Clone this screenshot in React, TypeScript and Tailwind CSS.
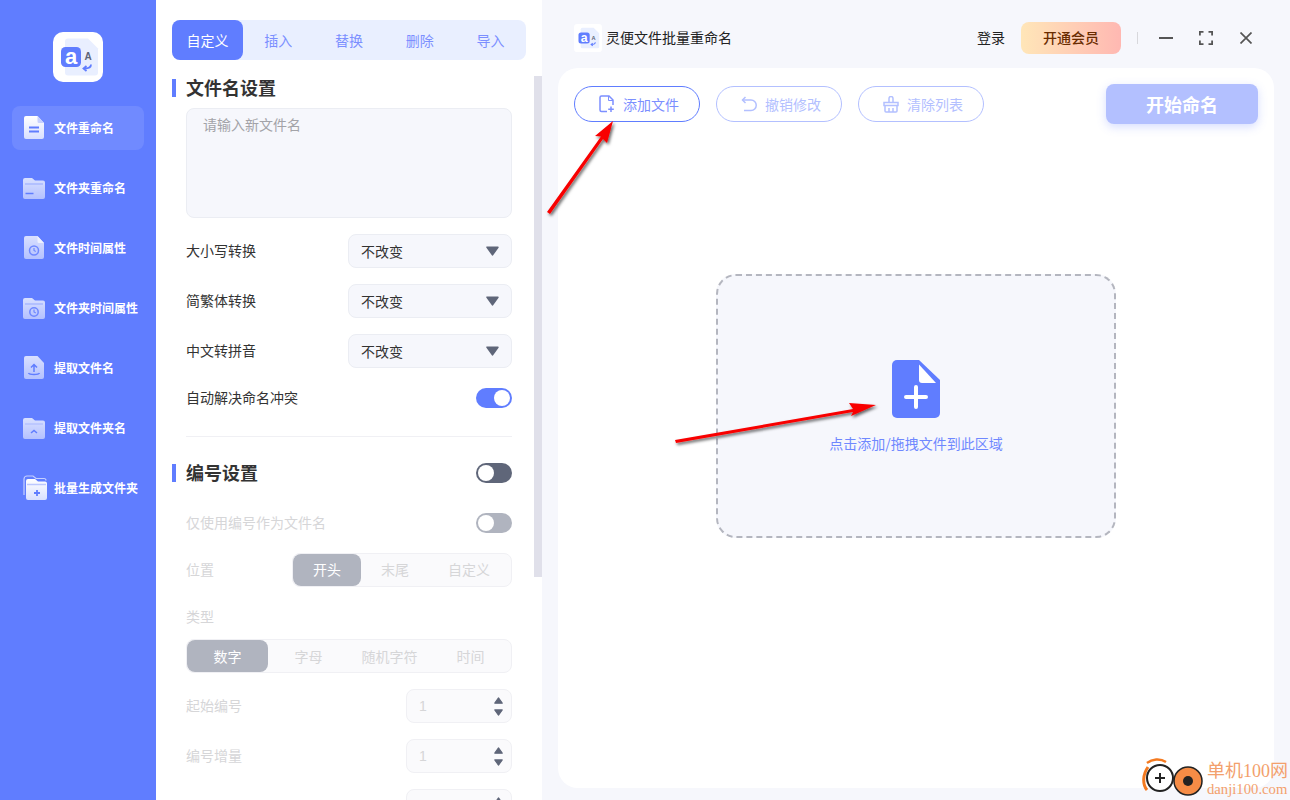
import React from "react";

function Logo({ size, dark = false }: { size: number; dark?: boolean }) {
  return (
    <svg width={size} height={size} viewBox="0 0 50 50" className="shrink-0">
      <rect width="50" height="50" rx={dark ? 6 : 10} fill="#fff" />
      <path d="M15 6.500h20l10 10v24a3 3 0 0 1-3 3H15a3 3 0 0 1-3-3v-31a3 3 0 0 1 3-3z" fill="#e9efff" />
      <rect x="8" y="15" width="20" height="20" rx="4.500" fill="#607dff" />
      <text x="18" y="32" textAnchor="middle" fontFamily="Liberation Sans" fontWeight="700" fontSize="22" fill="#fff">a</text>
      <text x="35" y="28" textAnchor="middle" fontFamily="Liberation Sans" fontWeight="700" fontSize="10" fill="#5d6478">A</text>
      <path d="M38 32.500c0 3-2.500 4-6.500 4M33.500 34l-3 2.500 3 2.500" stroke="#607dff" strokeWidth="1.800" fill="none" />
    </svg>
  );
}

function NavGrad() {
  return (
    <svg width="0" height="0" className="absolute">
      <defs>
        <linearGradient id="navA" x1="0" y1="0" x2="0" y2="1">
          <stop offset="0" stopColor="#ffffff" />
          <stop offset="1" stopColor="#d8dfff" />
        </linearGradient>
        <linearGradient id="navB" x1="0" y1="0" x2="0" y2="1">
          <stop offset="0" stopColor="#d9e0ff" />
          <stop offset="1" stopColor="#b4c1ff" />
        </linearGradient>
      </defs>
    </svg>
  );
}

const filePath = "M2 0h11.500L20 7v14a2 2 0 0 1-2 2H2a2 2 0 0 1-2-2V2a2 2 0 0 1 2-2z";
const folderPath = "M2 0h7l3 2.500h8a2 2 0 0 1 2 2V19a2 2 0 0 1-2 2H2a2 2 0 0 1-2-2V2a2 2 0 0 1 2-2z";

function Clock({ cx, cy, r }: { cx: number; cy: number; r: number }) {
  return (
    <g fill="none" stroke="#6f88ff" strokeWidth="1.500">
      <circle cx={cx} cy={cy} r={r} />
      <path d={`M${cx} ${cy - 2.500}V${cy}l1.800 1`} strokeWidth="1.200" />
    </g>
  );
}

function NavIcon({ kind }: { kind: number }) {
  if (kind === 0)
    return (
      <svg width="22" height="24" viewBox="-1 0 22 24">
        <path d={filePath} fill="url(#navA)" />
        <path d="M13.500 0L20 7h-5a1.500 1.500 0 0 1-1.500-1.500z" fill="#c6d0ff" />
        <path d="M5 11.500h10M5 15.500h10" stroke="#607dff" strokeWidth="2" />
      </svg>
    );
  if (kind === 1)
    return (
      <svg width="22" height="21" viewBox="0 0 22 21">
        <path d={folderPath} fill="url(#navB)" />
        <path d="M2 6h18" stroke="#a9b8ff" strokeWidth="1.500" />
        <path d="M2.500 15.500h8" stroke="#607dff" strokeWidth="1.500" />
      </svg>
    );
  if (kind === 2)
    return (
      <svg width="22" height="24" viewBox="-1 0 22 24">
        <path d={filePath} fill="url(#navB)" />
        <path d="M13.500 0L20 7h-5a1.500 1.500 0 0 1-1.500-1.500z" fill="#eef1ff" />
        <Clock cx={10} cy={14.500} r={4.500} />
      </svg>
    );
  if (kind === 3)
    return (
      <svg width="22" height="21" viewBox="0 0 22 21">
        <path d={folderPath} fill="url(#navB)" />
        <path d="M2 6h18" stroke="#a9b8ff" strokeWidth="1.500" />
        <Clock cx={11} cy={14} r={4.200} />
      </svg>
    );
  if (kind === 4)
    return (
      <svg width="22" height="24" viewBox="-1 0 22 24">
        <path d={filePath} fill="url(#navB)" />
        <path d="M10 16V8.500M7 11.500l3-3 3 3" stroke="#607dff" strokeWidth="1.500" fill="none" />
        <path d="M4.500 17c1 2 10 2 11 0" stroke="#607dff" strokeWidth="1.500" fill="none" />
      </svg>
    );
  if (kind === 5)
    return (
      <svg width="22" height="21" viewBox="0 0 22 21">
        <path d={folderPath} fill="url(#navB)" />
        <path d="M2 6h18" stroke="#a9b8ff" strokeWidth="1" />
        <path d="M8 15l3-2.500 3 2.500" stroke="#607dff" strokeWidth="1.500" fill="none" />
      </svg>
    );
  return (
    <svg width="26" height="26" viewBox="0 0 26 26">
      <path d="M1 20V4a3 3 0 0 1 3-3h6l3 2.500h8a2 2 0 0 1 2 2" stroke="#c6d0ff" strokeWidth="1.200" fill="none" />
      <path d="M5 4h7l3 2.500h7a2 2 0 0 1 2 2V23a2 2 0 0 1-2 2H5a2 2 0 0 1-2-2V6a2 2 0 0 1 2-2z" fill="url(#navA)" />
      <path d="M4 9.500h19" stroke="#bcc8ff" strokeWidth="1.500" />
      <path d="M14 15v6M11 18h6" stroke="#607dff" strokeWidth="1.800" />
    </svg>
  );
}

const navItems = ["文件重命名", "文件夹重命名", "文件时间属性", "文件夹时间属性", "提取文件名", "提取文件夹名", "批量生成文件夹"];

function Sidebar() {
  return (
    <aside className="w-[156px] shrink-0 bg-[#607dff] flex flex-col items-center pt-8">
      <NavGrad />
      <Logo size={50} />
      <nav className="mt-6 w-[132px] flex flex-col gap-4">
        {navItems.map((t, i) => (
          <div key={t} className={`h-11 rounded-lg flex items-center pl-[11px] ${i === 0 ? "bg-[#708aff]" : ""}`}>
            <span className="w-[31px] flex justify-start shrink-0">
              <NavIcon kind={i} />
            </span>
            <span className="text-xs font-bold text-white whitespace-nowrap">{t}</span>
          </div>
        ))}
      </nav>
    </aside>
  );
}

function Heading({ children }: { children: React.ReactNode }) {
  return (
    <div className="flex items-center gap-[10px]">
      <span className="w-1 h-[18px] bg-[#607dff]" />
      <span className="text-lg leading-[18px] font-bold text-[#333] -mt-0.5">{children}</span>
    </div>
  );
}

function Toggle({ on, bg }: { on: boolean; bg: string }) {
  return (
    <span className={`w-9 h-5 rounded-full flex items-center px-0.5 ${on ? "justify-end" : "justify-start"} ${bg}`}>
      <span className="w-4 h-4 rounded-full bg-white" />
    </span>
  );
}

function Tri({ w, h, down, fill = "#5f6679" }: { w: number; h: number; down: boolean; fill?: string }) {
  return (
    <svg width={w} height={h} viewBox="0 0 12 9">
      <path d={down ? "M1 1h10L6 8z" : "M1 8h10L6 1z"} fill={fill} stroke={fill} strokeWidth="1.500" strokeLinejoin="round" />
    </svg>
  );
}

function SelectRow({ label }: { label: string }) {
  return (
    <div className="flex items-center justify-between h-[34px]">
      <span className="text-sm text-[#333] -mt-0.5">{label}</span>
      <div className="w-[164px] h-[34px] rounded-lg border border-[#ebedf3] bg-[#f6f7fc] flex items-center justify-between pl-3 pr-3">
        <span className="text-sm text-[#333]">不改变</span>
        <Tri w={13} h={10} down />
      </div>
    </div>
  );
}

function Segmented({ items, widths, w, lift }: { items: string[]; widths: string[]; w: string; lift?: boolean }) {
  return (
    <div className={`h-[34px] rounded-lg border border-[#f0f0f4] bg-[#fafafc] flex ${w}`}>
      {items.map((t, i) => (
        <div
          key={t}
          className={`${widths[i]} h-full flex items-center justify-center text-sm rounded-lg ${lift ? "pb-0.5" : ""} ${i === 0 ? "bg-[#b0b4bf] text-white" : "text-[#d6d6d8]"}`}
        >
          {t}
        </div>
      ))}
    </div>
  );
}

function NumberRow({ label, value }: { label?: string; value?: string }) {
  return (
    <div className="flex items-center justify-between h-[34px]">
      <span className="text-sm text-[#d6d6d8] -mt-0.5">{label}</span>
      <div className="w-[106px] h-[34px] rounded-lg border border-[#f0f0f4] bg-[#fafafc] flex items-center justify-between pl-3 pr-2">
        <span className="text-sm text-[#d6d6d8] font-['Liberation_Sans']">{value}</span>
        <span className="flex flex-col gap-[5px]">
          <Tri w={9} h={7} down={false} />
          <Tri w={9} h={7} down />
        </span>
      </div>
    </div>
  );
}

function Settings() {
  const tabs = ["自定义", "插入", "替换", "删除", "导入"];
  return (
    <section className="w-[386px] shrink-0 bg-white pl-4 pt-5 overflow-hidden relative h-[800px]">
      <div className="w-[354px] h-10 rounded-lg bg-[#e9efff] flex">
        {tabs.map((t, i) => (
          <div
            key={t}
            className={`flex-1 flex items-center justify-center text-sm rounded-lg ${i === 0 ? "bg-[#607dff] text-white" : "text-[#7c8fff]"}`}
          >
            {t}
          </div>
        ))}
      </div>
      <div className="absolute right-0 top-[76px] w-2 h-[501px] bg-[#e0e0ea]" />
      <div className="mt-[19px]">
        <Heading>文件名设置</Heading>
      </div>
      <div className="ml-[14px] w-[326px]">
        <div className="mt-[11px] h-[110px] rounded-lg border border-[#ebedf3] bg-[#f6f7fc] px-4 py-[5px] text-sm text-[#a3a3a8]">请输入新文件名</div>
        <div className="mt-4 flex flex-col gap-4">
          <SelectRow label="大小写转换" />
          <SelectRow label="简繁体转换" />
          <SelectRow label="中文转拼音" />
        </div>
        <div className="mt-5 flex items-center justify-between h-5">
          <span className="text-sm text-[#333] -mt-0.5">自动解决命名冲突</span>
          <Toggle on bg="bg-[#607dff]" />
        </div>
        <div className="mt-7 h-px bg-[#f0f0f4]" />
      </div>
      <div className="mt-[26px] flex items-center justify-between w-[340px]">
        <Heading>编号设置</Heading>
        <Toggle on={false} bg="bg-[#5f6679]" />
      </div>
      <div className="ml-[14px] w-[326px]">
        <div className="mt-[30px] flex items-center justify-between h-5">
          <span className="text-sm text-[#d6d6d8] -mt-0.5">仅使用编号作为文件名</span>
          <Toggle on={false} bg="bg-[#b0b4bf]" />
        </div>
        <div className="mt-5 flex items-center justify-between">
          <span className="text-sm text-[#d6d6d8] -mt-0.5">位置</span>
          <Segmented lift items={["开头", "末尾", "自定义"]} widths={["w-[68px]", "w-[68px]", "w-[80px]"]} w="w-[220px]" />
        </div>
        <div className="mt-[20px] h-5 flex items-center text-sm text-[#d6d6d8] pb-0.5">类型</div>
        <div className="mt-3">
          <Segmented items={["数字", "字母", "随机字符", "时间"]} widths={["w-[81px]", "w-[81px]", "w-[81px]", "w-[81px]"]} w="w-[326px]" />
        </div>
        <div className="mt-4 flex flex-col gap-4">
          <NumberRow label="起始编号" value="1" />
          <NumberRow label="编号增量" value="1" />
          <NumberRow />
        </div>
      </div>
    </section>
  );
}

function ToolButton({ icon, label, active }: { icon: React.ReactNode; label: string; active?: boolean }) {
  return (
    <div
      className={`w-[126px] h-9 rounded-full border flex items-center pl-6 gap-2 text-sm bg-white ${
        active ? "border-[#607dff] text-[#7c8fff]" : "border-[#b3c0ff] text-[#b3c0ff]"
      }`}
    >
      {icon}
      {label}
    </div>
  );
}

const AddIcon = (
  <svg width="16" height="18" viewBox="0 0 16 18" fill="none" stroke="#7c8fff" strokeWidth="1.500">
    <path d="M8 16.500H2.500a1.500 1.500 0 0 1-1.500-1.500V2.500A1.500 1.500 0 0 1 2.500 1H10l4 4v5" />
    <path d="M9.500 1v4.500H14" strokeWidth="1" />
    <path d="M12 11.500v5.500M9.200 14.200h5.600" />
  </svg>
);
const UndoIcon = (
  <svg width="16" height="16" viewBox="0 0 16 16" fill="none" stroke="#b3c0ff" strokeWidth="1.500">
    <path d="M4.500 1L1.500 4l3 3" />
    <path d="M1.500 4H10a5 5 0 0 1 0 10.500H3" />
  </svg>
);
const BasketIcon = (
  <svg width="16" height="17" viewBox="0 0 16 17" fill="none" stroke="#b3c0ff" strokeWidth="1.500">
    <path d="M6 6V2.500a2 2 0 0 1 4 0V6" />
    <path d="M1 6.500h14v3H1z" />
    <path d="M2 9.500V15a1 1 0 0 0 1 1h10a1 1 0 0 0 1-1V9.500M6 12v4M10 12v4" />
  </svg>
);

function Main() {
  return (
    <main className="flex-1 bg-[#f6f7fc] flex flex-col h-[800px] px-4 pb-3">
      <header className="h-[68px] flex items-center pt-2 pl-4 pr-[22px]">
        <Logo size={28} dark />
        <span className="ml-1 text-sm text-[#222] -mt-0.5">灵便文件批量重命名</span>
        <span className="ml-auto text-sm text-[#222] -mt-0.5">登录</span>
        <div className="ml-[16px] w-[100px] h-8 pb-0.5 rounded-lg bg-gradient-to-r from-[#ffe6b8] to-[#ffb8b2] flex items-center justify-center text-sm font-medium text-[#6a2c00]">
          开通会员
        </div>
        <span className="ml-4 w-px h-3 bg-[#d8d8dc]" />
        <span className="ml-[21px] w-[14px] h-[2px] bg-[#555]" />
        <svg className="ml-[26px]" width="14" height="14" viewBox="0 0 14 14" fill="none" stroke="#555" strokeWidth="1.800">
          <path d="M.900 4.500V.900h3.600M9.500.900h3.600v3.600M13.100 9.500v3.600H9.500M4.500 13.100H.900V9.500" />
        </svg>
        <svg className="ml-[27px]" width="12" height="12" viewBox="0 0 12 12" fill="none" stroke="#555" strokeWidth="1.700">
          <path d="M.500.500l11 11M11.500.500l-11 11" />
        </svg>
      </header>
      <div className="flex-1 bg-white rounded-[20px] flex flex-col">
        <div className="flex items-start px-4 pt-4">
          <div className="flex gap-4 mt-0.5">
            <ToolButton icon={AddIcon} label="添加文件" active />
            <ToolButton icon={UndoIcon} label="撤销修改" />
            <ToolButton icon={BasketIcon} label="清除列表" />
          </div>
          <div className="ml-auto w-[152px] h-10 rounded-lg bg-[#b3c0ff] shadow-[0_3px_10px_rgba(96,125,255,0.25)] flex items-center justify-center text-lg font-bold text-white">
            开始命名
          </div>
        </div>
        <div className="mt-[150px] ml-[158px] w-[400px] h-[264px] rounded-[20px] border-2 border-dashed border-[#b4b6bf] bg-[#f6f7fc] flex flex-col items-center pt-[84px]">
          <svg width="48" height="58" viewBox="0 0 48 58">
            <path d="M5 0h22l21 20v33a5 5 0 0 1-5 5H5a5 5 0 0 1-5-5V5a5 5 0 0 1 5-5z" fill="#607dff" />
            <path d="M27 4.500L44 23H30a3 3 0 0 1-3-3z" fill="#fff" />
            <path d="M24 27v20M14 37h20" stroke="#fff" strokeWidth="4" strokeLinecap="round" />
          </svg>
          <span className="mt-[15px] text-sm leading-5 text-[#6f88ff]">点击添加/拖拽文件到此区域</span>
        </div>
      </div>
    </main>
  );
}

function Arrows() {
  return (
    <svg className="absolute inset-0 pointer-events-none" width="1290" height="800" viewBox="0 0 1290 800">
      <defs>
        <filter id="arrowShadow" x="-20%" y="-20%" width="150%" height="150%">
          <feDropShadow dx="1.500" dy="2" stdDeviation="1.500" floodColor="#000" floodOpacity="0.6" />
        </filter>
      </defs>
      <g fill="#f80000" filter="url(#arrowShadow)">
        <path d="M547 212L601 136.500 595 136 613 121 607 143 603 139 550 214z" />
        <path d="M675 440L853 409 849 403 876 405 851 416 853 412 676 443z" />
      </g>
    </svg>
  );
}

function Watermark() {
  return (
    <div className="absolute right-0 bottom-0 w-[150px] h-[44px] flex items-center">
      <svg width="66" height="44" viewBox="0 0 66 44" className="shrink-0 ml-0.5 mt-0.5">
        <path d="M6 10C1 17 0 27 5 33" stroke="#f47a20" strokeWidth="3" fill="none" />
        <path d="M5 6c5-4 13-5 19-1" stroke="#f47a20" strokeWidth="2.500" fill="none" />
        <circle cx="18" cy="21" r="13" stroke="#222" strokeWidth="2" fill="#fff" />
        <path d="M18 16v10M13 21h10" stroke="#222" strokeWidth="2" />
        <circle cx="46" cy="24" r="14" fill="#f58c46" stroke="#222" strokeWidth="1.500" />
        <circle cx="46" cy="24" r="5" fill="#222" />
      </svg>
      <div className="-ml-[1px] flex flex-col font-['Liberation_Serif','Noto_Sans_CJK_SC',serif] text-[#f3a06c] whitespace-nowrap">
        <span className="text-lg leading-[22px]">单机100网</span>
        <span className="text-[14.700px] leading-[15px]">danji100.com</span>
      </div>
    </div>
  );
}

export default function App() {
  return (
    <div className="relative w-[1290px] h-[800px] overflow-hidden flex font-['Noto_Sans_CJK_SC','Liberation_Sans',sans-serif]">
      <Sidebar />
      <Settings />
      <Main />
      <Arrows />
      <Watermark />
    </div>
  );
}
